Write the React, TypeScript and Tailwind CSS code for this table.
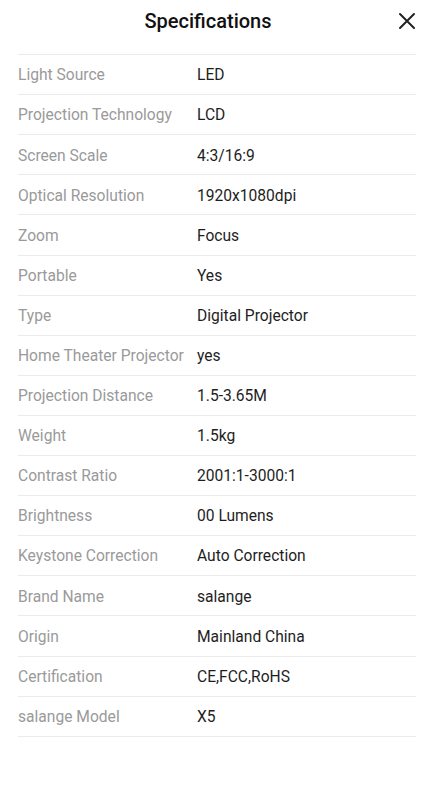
import React from "react";

const rows: [string, string][] = [
  ["Light Source", "LED"],
  ["Projection Technology", "LCD"],
  ["Screen Scale", "4:3/16:9"],
  ["Optical Resolution", "1920x1080dpi"],
  ["Zoom", "Focus"],
  ["Portable", "Yes"],
  ["Type", "Digital Projector"],
  ["Home Theater Projector", "yes"],
  ["Projection Distance", "1.5-3.65M"],
  ["Weight", "1.5kg"],
  ["Contrast Ratio", "2001:1-3000:1"],
  ["Brightness", "00 Lumens"],
  ["Keystone Correction", "Auto Correction"],
  ["Brand Name", "salange"],
  ["Origin", "Mainland China"],
  ["Certification", "CE,FCC,RoHS"],
  ["salange Model", "X5"],
];

function Row({ label, value }: { label: string; value: string }) {
  return (
    <div className="flex h-[40.1px] items-center border-b border-[#ebebeb] pt-[3px] text-[15.6px] leading-none">
      <div className="w-[179px] shrink-0 whitespace-nowrap text-[#9a9a9a]">{label}</div>
      <div className="text-[#1e1e1e]">{value}</div>
    </div>
  );
}

export default function App() {
  return (
    <div
      className="h-[800px] w-[434px] overflow-hidden bg-white"
      style={{ fontFamily: "Roboto, 'Noto Sans', sans-serif" }}
    >
      <div className="relative flex h-[45px] items-start justify-center pr-[18px] pt-[8px]">
        <div className="text-[20px] font-medium leading-[26px] text-[#111]">Specifications</div>
        <button className="absolute right-[18px] top-[12px] text-[#222]">
          <svg width="18" height="18" viewBox="0 0 18 18" fill="none">
            <path d="M2 2L16 16M16 2L2 16" stroke="currentColor" strokeWidth="2" strokeLinecap="round" />
          </svg>
        </button>
      </div>
      <div className="mx-[18px] h-[755px] overflow-hidden">
        <div className="-mt-[30px]">
          <Row label="Lamp Life Expectancy" value="30000 Hours Average" />
          {rows.map(([l, v]) => (
            <Row key={l} label={l} value={v} />
          ))}
        </div>
      </div>
    </div>
  );
}
